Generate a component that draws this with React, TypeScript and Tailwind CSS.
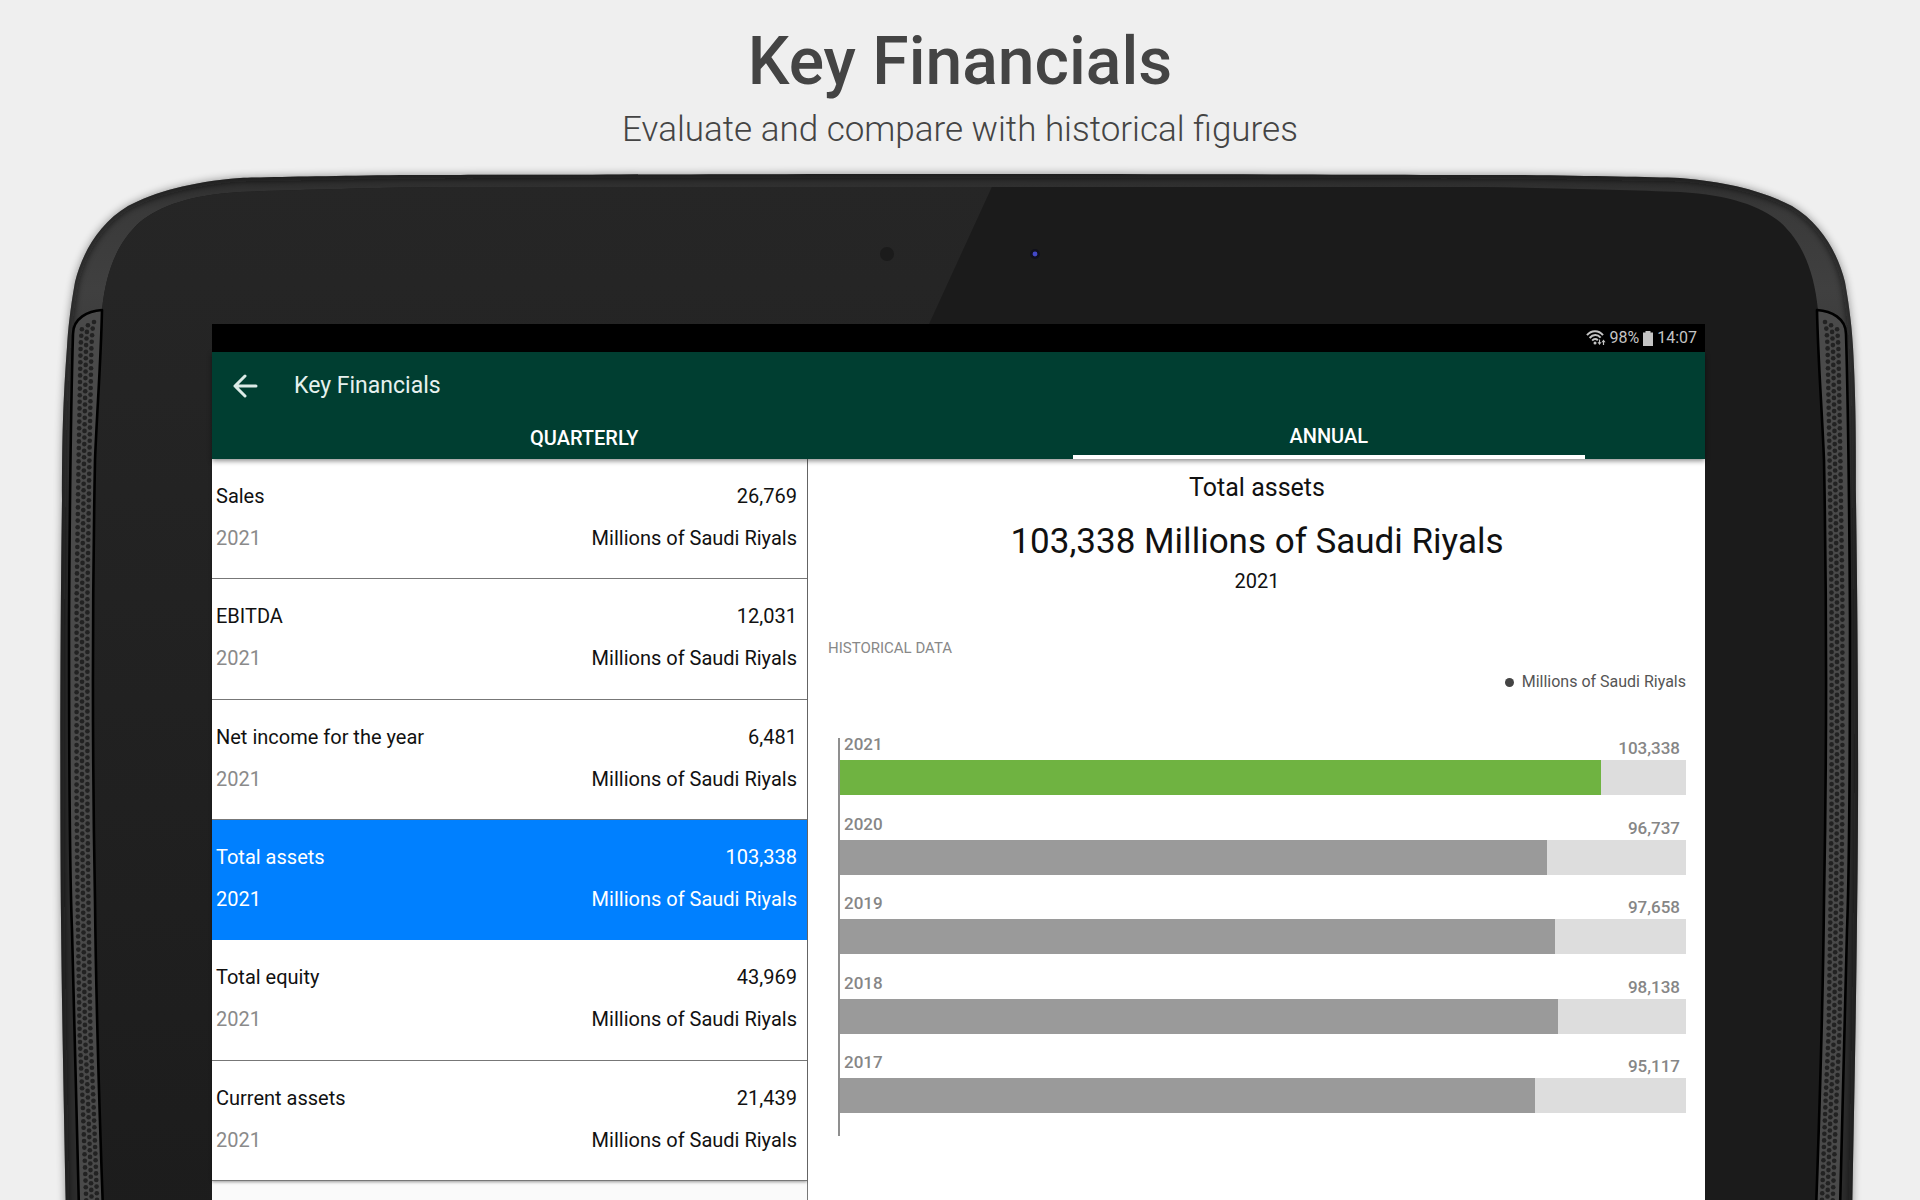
import React, { useState } from 'react';

interface Metric {
  label: string;
  value: string;
}

interface HistoryEntry {
  year: string;
  value: string;
  percent: number;
}

const UNIT = 'Millions of Saudi Riyals';

const metrics: Metric[] = [
  { label: 'Sales', value: '26,769' },
  { label: 'EBITDA', value: '12,031' },
  { label: 'Net income for the year', value: '6,481' },
  { label: 'Total assets', value: '103,338' },
  { label: 'Total equity', value: '43,969' },
  { label: 'Current assets', value: '21,439' },
];

const history: HistoryEntry[] = [
  { year: '2021', value: '103,338', percent: 90 },
  { year: '2020', value: '96,737', percent: 83.6 },
  { year: '2019', value: '97,658', percent: 84.5 },
  { year: '2018', value: '98,138', percent: 84.9 },
  { year: '2017', value: '95,117', percent: 82.1 },
];

// center line of the speaker grille as [y, x] pairs
const grilleLine = [
  [320, 89],
  [330, 87],
  [347, 86],
  [460, 84],
  [600, 82],
  [800, 82],
  [900, 83],
  [1033, 85],
  [1100, 88],
  [1210, 92],
];

const grilleX = (y: number) => {
  const i = Math.max(1, grilleLine.findIndex(([py]) => py >= y));
  const [y0, x0] = grilleLine[i - 1];
  const [y1, x1] = grilleLine[i];
  return x0 + ((y - y0) / (y1 - y0)) * (x1 - x0);
};

const grilleHoles: { x: number; y: number }[] = [];
for (let y = 322; y < 1202; y += 6.6) {
  grilleHoles.push({ x: grilleX(y) + 5.4, y });
  if (y > 324) grilleHoles.push({ x: grilleX(y) - 5.4, y: y + 0.6 });
  grilleHoles.push({ x: grilleX(y + 3.3), y: y + 3.3 });
}

function Speaker() {
  return (
    <g>
      <path
        d="M102 310 C88 311 73 318 73 334 C71 400 70 460 69 620 C69 780 70 880 72 930 C74 1020 76 1110 79 1210 H103 C99 1100 96 1000 95 900 C92 740 92 620 95 460 C97 410 101 360 102 310 Z"
        fill="#4a4a4a"
        stroke="#000"
        strokeWidth="2.6"
        strokeLinejoin="round"
      />
      {grilleHoles.map((hole, i) => (
        <circle key={i} cx={hole.x} cy={hole.y} r="2.3" fill="#222" />
      ))}
    </g>
  );
}

function TabletFrame() {
  return (
    <svg className="absolute inset-x-0 top-0 w-full h-auto" viewBox="0 160 1920 1040" aria-hidden="true">
      <defs>
        <linearGradient id="glassLeft" x1="0" y1="0" x2="0" y2="1">
          <stop offset="0" stopColor="#262626" />
          <stop offset="1" stopColor="#1c1c1c" />
        </linearGradient>
        <linearGradient id="body" gradientUnits="userSpaceOnUse" x1="0" y1="174" x2="0" y2="560">
          <stop offset="0" stopColor="#2b2b2b" />
          <stop offset="0.1" stopColor="#3a3a3a" />
          <stop offset="0.3" stopColor="#404040" />
          <stop offset="1" stopColor="#2c2c2c" />
        </linearGradient>
        <filter id="soft" x="-5%" y="-5%" width="110%" height="110%">
          <feGaussianBlur stdDeviation="4" />
        </filter>
        <filter id="edge" x="-5%" y="-5%" width="110%" height="110%">
          <feGaussianBlur stdDeviation="3" />
        </filter>
        <path
          id="outline"
          d="M960 174 C700 174 480 175 400 175 C330 176 270 177 240 178 C190 182 155 192 128 206 C98 224 82 254 75 282 C70 310 68 330 67 347 C63 400 62 440 62 500 C60 640 60 800 61 920 C62 1020 64 1110 66 1220 H1852 C1854 1110 1856 1020 1857 920 C1859 800 1858 640 1856 500 C1856 440 1856 400 1853 347 C1852 330 1850 310 1845 282 C1838 254 1822 224 1792 206 C1765 192 1730 182 1680 178 C1650 177 1590 176 1520 175 C1440 175 1220 174 960 174 Z"
        />
        <path
          id="glass"
          d="M960 187 H440 C370 188 290 190 240 192 C190 195 160 206 140 222 C118 242 106 270 102 310 C101 360 97 410 95 460 C92 620 92 740 95 900 C96 1000 99 1100 103 1220 H1817 C1821 1100 1824 1000 1825 900 C1828 740 1828 620 1825 460 C1823 410 1819 360 1818 310 C1814 270 1802 242 1780 222 C1760 206 1730 195 1680 192 C1630 190 1550 188 1480 187 Z"
        />
        <clipPath id="glassClip">
          <use href="#glass" />
        </clipPath>
        <clipPath id="bodyClip">
          <use href="#outline" />
        </clipPath>
      </defs>
      <use href="#outline" fill="#000" opacity="0.4" filter="url(#soft)" />
      <use href="#outline" fill="url(#body)" />
      <g clipPath="url(#bodyClip)">
        <use href="#outline" fill="none" stroke="#111" strokeWidth="7" opacity="0.6" filter="url(#edge)" />
      </g>
      <use href="#glass" fill="#1b1b1b" />
      <path d="M0 180 H995 L929 324 L600 1220 H0 Z" fill="url(#glassLeft)" clipPath="url(#glassClip)" />
      <circle cx="887" cy="254" r="7" fill="#1b1b1b" />
      <circle cx="1035" cy="254" r="5" fill="#10101c" />
      <circle cx="1035" cy="254" r="2.4" fill="#4348c8" />
      <Speaker />
      <g transform="translate(1919 0) scale(-1 1)">
        <Speaker />
      </g>
    </svg>
  );
}

function StatusBar() {
  return (
    <div className="flex h-7 items-center justify-end bg-black pr-2 text-[16px] leading-none text-[#c4c4c4]">
      <svg width="20" height="16" viewBox="0 0 20 16" fill="none" stroke="#c4c4c4" strokeWidth="2" className="mr-[3px]">
        <path d="M1 5.2C5.2 0 12.8 0 17 5.2" />
        <path d="M3.6 8C7 4.2 11.5 4.2 14.6 7.6" />
        <path d="M6.2 10.6C8 8.6 10.2 8.6 11.8 10.2" />
        <circle cx="9" cy="13" r="1.5" fill="#c4c4c4" stroke="none" />
        <path d="M13.5 9.5V13M17.5 15V11.5" strokeWidth="1.2" />
        <path d="M11.5 12.2H15.5L13.5 15ZM15.5 12.3H19.5L17.5 9.5Z" fill="#c4c4c4" stroke="none" />
      </svg>
      <span>98%</span>
      <svg width="10" height="15" viewBox="0 0 10 15" className="mx-1">
        <path d="M2.5 0H7.5V1.5H10V15H0V1.5H2.5Z" fill="#c4c4c4" />
      </svg>
      <span>14:07</span>
    </div>
  );
}

interface AppBarProps {
  tab: string;
  onTab: (tab: string) => void;
}

function AppBar({ tab, onTab }: AppBarProps) {
  return (
    <header className="relative z-10 bg-[#003e31] text-white shadow-[0_2px_5px_rgba(0,0,0,0.45)]">
      <div className="flex h-16 items-center pl-5 pt-[3px]">
        <button type="button" aria-label="Back" className="mr-9">
          <svg width="26" height="26" viewBox="0 0 26 26" fill="none" stroke="#dcebe7" strokeWidth="3" strokeLinecap="round" strokeLinejoin="round">
            <path d="M24 13H3M13 3L3 13L13 23" />
          </svg>
        </button>
        <h2 className="text-[23px] leading-7 text-[#e6f1ee]">Key Financials</h2>
      </div>
      <nav className="flex h-[43px] pr-1">
        {['Quarterly', 'Annual'].map((name) => (
          <button
            key={name}
            type="button"
            onClick={() => onTab(name)}
            className="flex flex-1 flex-col items-center text-[20px] font-medium uppercase leading-6"
          >
            <span className="flex flex-1 items-center">{name}</span>
            {tab === name && <span className="h-1 w-[512px] max-w-full bg-white" />}
          </button>
        ))}
      </nav>
    </header>
  );
}

interface MetricListProps {
  selected: string;
  onSelect: (label: string) => void;
}

function MetricList({ selected, onSelect }: MetricListProps) {
  return (
    <div className="w-[596px] shrink-0 border-r border-[#777] bg-[#fafafa]">
      <div className="grid h-[722px] grid-rows-6 shadow-[0_1px_3px_rgba(0,0,0,0.4)]">
        {metrics.map((metric) => {
          const active = metric.label === selected;
          return (
            <button
              key={metric.label}
              type="button"
              onClick={() => onSelect(metric.label)}
              className={`flex flex-col gap-[18px] border-b pl-1 pr-[10px] pt-[25px] text-[20px] leading-6 ${
                active ? 'border-[#0080ff] bg-[#0080ff] text-white' : 'border-[#777] bg-white text-[#111]'
              }`}
            >
              <span className="flex w-full justify-between">
                <span>{metric.label}</span>
                <span>{metric.value}</span>
              </span>
              <span className="flex w-full justify-between">
                <span className={active ? 'text-white' : 'text-[#8a8a8a]'}>2021</span>
                <span>{UNIT}</span>
              </span>
            </button>
          );
        })}
      </div>
    </div>
  );
}

function HistoryChart() {
  return (
    <div className="ml-[10px] mt-[46px] grid h-[398px] grid-rows-5 border-l-2 border-[#8f8f8f]">
      {history.map((entry, i) => (
        <div key={entry.year}>
          <div className="flex h-[22px] justify-between pl-1 pr-[6px] text-[17px] font-medium leading-5 text-[#868686]">
            <span className="-mt-1">{entry.year}</span>
            <span>{entry.value}</span>
          </div>
          <div className="h-[35px] bg-[#ddd]">
            <div
              className={`h-full ${i === 0 ? 'bg-[#6fb341]' : 'bg-[#9a9a9a]'}`}
              style={{ width: `${entry.percent}%` }}
            />
          </div>
        </div>
      ))}
    </div>
  );
}

function MetricDetail({ metric }: { metric: Metric }) {
  return (
    <section className="flex-1 bg-white pl-5 pr-[19px] pt-[13px] text-[#111]">
      <div className="text-center">
        <h3 className="text-[25px] leading-8">{metric.label}</h3>
        <p className="mt-4 text-[35px] leading-[44px]">
          {metric.value} {UNIT}
        </p>
        <p className="mt-[5px] text-[20px] leading-6">2021</p>
      </div>
      <h4 className="mt-[45px] text-[15px] leading-5 text-[#888]">HISTORICAL DATA</h4>
      <div className="mt-[14px] flex items-center justify-end gap-2 text-[16px] leading-5 text-[#555]">
        <span className="size-[9px] rounded-full bg-[#444]" />
        <span>{UNIT}</span>
      </div>
      <HistoryChart />
    </section>
  );
}

export default function App() {
  const [tab, setTab] = useState('Annual');
  const [selected, setSelected] = useState('Total assets');
  const metric = metrics.find((m) => m.label === selected) || metrics[0];

  return (
    <div className="flex h-screen flex-col overflow-hidden bg-[#efefef] font-[Roboto,sans-serif]">
      <div className="h-[160px] shrink-0 pt-[22px] text-center text-[#444]">
        <h1 className="text-[66px] font-medium leading-[80px]">Key Financials</h1>
        <p className="mt-2 text-[35px] font-light leading-10">Evaluate and compare with historical figures</p>
      </div>
      <div className="relative flex flex-1 pl-[212px] pr-[215px] pt-[164px]">
        <TabletFrame />
        <main className="relative flex flex-1 flex-col">
          <StatusBar />
          <AppBar tab={tab} onTab={setTab} />
          <div className="flex flex-1">
            <MetricList selected={selected} onSelect={setSelected} />
            <MetricDetail metric={metric} />
          </div>
        </main>
      </div>
    </div>
  );
}
